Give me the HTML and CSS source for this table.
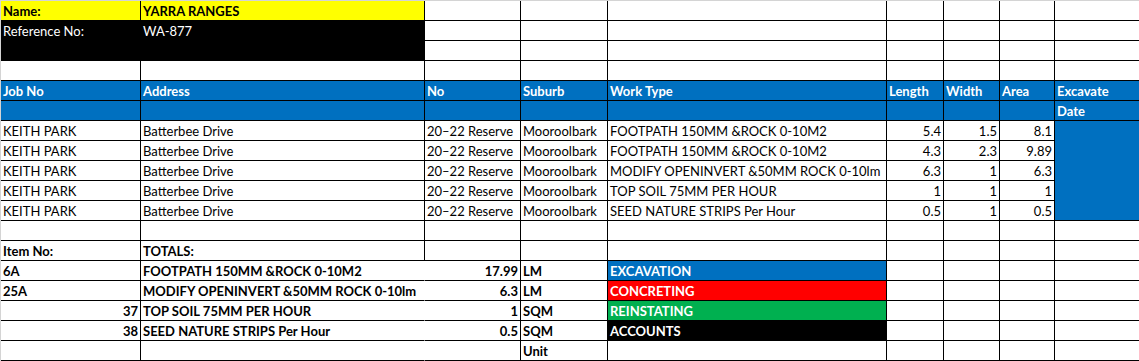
FILE: index.html
```html
<!DOCTYPE html>
<html>
<head>
<meta charset="utf-8">
<link rel="stylesheet" href="styles.css">
</head>
<body>
<div class="sheet">
  <!-- row 1 -->
  <div class="c yel b">Name:</div><div class="c yel b">YARRA RANGES</div><div class="c"></div><div class="c"></div><div class="c"></div><div class="c"></div><div class="c"></div><div class="c"></div><div class="c"></div>
  <!-- row 2 -->
  <div class="c blk">Reference No:</div><div class="c blk">WA-877</div><div class="c"></div><div class="c"></div><div class="c"></div><div class="c"></div><div class="c"></div><div class="c"></div><div class="c"></div>
  <!-- row 3 -->
  <div class="c blk"></div><div class="c blk"></div><div class="c"></div><div class="c"></div><div class="c"></div><div class="c"></div><div class="c"></div><div class="c"></div><div class="c"></div>
  <!-- row 4 -->
  <div class="c"></div><div class="c"></div><div class="c"></div><div class="c"></div><div class="c"></div><div class="c"></div><div class="c"></div><div class="c"></div><div class="c"></div>
  <!-- row 5 header -->
  <div class="c hd">Job No</div><div class="c hd">Address</div><div class="c hd">No</div><div class="c hd">Suburb</div><div class="c hd">Work Type</div><div class="c hd">Length</div><div class="c hd">Width</div><div class="c hd">Area</div><div class="c hd">Excavate</div>
  <!-- row 6 header -->
  <div class="c hd"></div><div class="c hd"></div><div class="c hd"></div><div class="c hd"></div><div class="c hd"></div><div class="c hd"></div><div class="c hd"></div><div class="c hd"></div><div class="c hd">Date</div>
  <!-- data rows -->
  <div class="c">KEITH PARK</div><div class="c">Batterbee Drive</div><div class="c">20–22 Reserve</div><div class="c">Mooroolbark</div><div class="c">FOOTPATH 150MM &amp;ROCK 0-10M2</div><div class="c r">5.4</div><div class="c r">1.5</div><div class="c r">8.1</div><div class="c bl"></div>
  <div class="c">KEITH PARK</div><div class="c">Batterbee Drive</div><div class="c">20–22 Reserve</div><div class="c">Mooroolbark</div><div class="c">FOOTPATH 150MM &amp;ROCK 0-10M2</div><div class="c r">4.3</div><div class="c r">2.3</div><div class="c r">9.89</div><div class="c bl"></div>
  <div class="c">KEITH PARK</div><div class="c">Batterbee Drive</div><div class="c">20–22 Reserve</div><div class="c">Mooroolbark</div><div class="c">MODIFY OPENINVERT &amp;50MM ROCK 0-10lm</div><div class="c r">6.3</div><div class="c r">1</div><div class="c r">6.3</div><div class="c bl"></div>
  <div class="c">KEITH PARK</div><div class="c">Batterbee Drive</div><div class="c">20–22 Reserve</div><div class="c">Mooroolbark</div><div class="c">TOP SOIL 75MM PER HOUR</div><div class="c r">1</div><div class="c r">1</div><div class="c r">1</div><div class="c bl"></div>
  <div class="c">KEITH PARK</div><div class="c">Batterbee Drive</div><div class="c">20–22 Reserve</div><div class="c">Mooroolbark</div><div class="c">SEED NATURE STRIPS Per Hour</div><div class="c r">0.5</div><div class="c r">1</div><div class="c r">0.5</div><div class="c bl last"></div>
  <!-- row 12 -->
  <div class="c"></div><div class="c"></div><div class="c"></div><div class="c"></div><div class="c"></div><div class="c"></div><div class="c"></div><div class="c"></div><div class="c"></div>
  <!-- totals -->
  <div class="c b">Item No:</div><div class="c b">TOTALS:</div><div class="c"></div><div class="c"></div><div class="c"></div><div class="c"></div><div class="c"></div><div class="c"></div><div class="c"></div>
  <div class="c b">6A</div><div class="c b join">FOOTPATH 150MM &amp;ROCK 0-10M2</div><div class="c b r">17.99</div><div class="c b">LM</div><div class="c b tag t-blue">EXCAVATION</div><div class="c"></div><div class="c"></div><div class="c"></div><div class="c"></div>
  <div class="c b">25A</div><div class="c b join">MODIFY OPENINVERT &amp;50MM ROCK 0-10lm</div><div class="c b r">6.3</div><div class="c b">LM</div><div class="c b tag t-red">CONCRETING</div><div class="c"></div><div class="c"></div><div class="c"></div><div class="c"></div>
  <div class="c b r">37</div><div class="c b join">TOP SOIL 75MM PER HOUR</div><div class="c b r">1</div><div class="c b">SQM</div><div class="c b tag t-green">REINSTATING</div><div class="c"></div><div class="c"></div><div class="c"></div><div class="c"></div>
  <div class="c b r">38</div><div class="c b join">SEED NATURE STRIPS Per Hour</div><div class="c b r">0.5</div><div class="c b">SQM</div><div class="c b tag t-black">ACCOUNTS</div><div class="c"></div><div class="c"></div><div class="c"></div><div class="c"></div>
  <div class="c"></div><div class="c join"></div><div class="c"></div><div class="c b">Unit</div><div class="c"></div><div class="c"></div><div class="c"></div><div class="c"></div><div class="c"></div>
</div>
</body>
</html>
```

FILE: styles.css
```css
html, body {
  margin: 0;
  padding: 0;
  background: #ffffff;
  overflow: hidden;
}

.sheet {
  display: grid;
  grid-template-columns: 140px 284px 96px 87px 279px 57px 56px 55px 85px;
  grid-auto-rows: 20px;
  border-left: 1px solid #d4d4d4;
  border-top: 1px solid #d4d4d4;
  width: max-content;
  font-family: "Lato", "Liberation Sans", sans-serif;
  font-size: 13px;
  color: #000;
}

.c {
  box-sizing: border-box;
  border-right: 1px solid #000;
  border-bottom: 1px solid #000;
  display: flex;
  align-items: flex-end;
  padding: 0 2px 1px 2px;
  line-height: 16px;
  white-space: nowrap;
}

.b { font-weight: bold; }
.r { justify-content: flex-end; }

.yel { background: #ffff00; }
.blk { background: #000; color: #fff; }
.hd { background: #0070c0; color: #fff; font-weight: bold; }
.bl { background: #0070c0; border-bottom-color: #0070c0; }
.bl.last { border-bottom-color: #000; }

.join { border-right-color: #fff; }

.tag { color: #fff; }
.t-blue { background: #0070c0; }
.t-red { background: #ff0000; }
.t-green { background: #00b050; }
.t-black { background: #000; }
```
